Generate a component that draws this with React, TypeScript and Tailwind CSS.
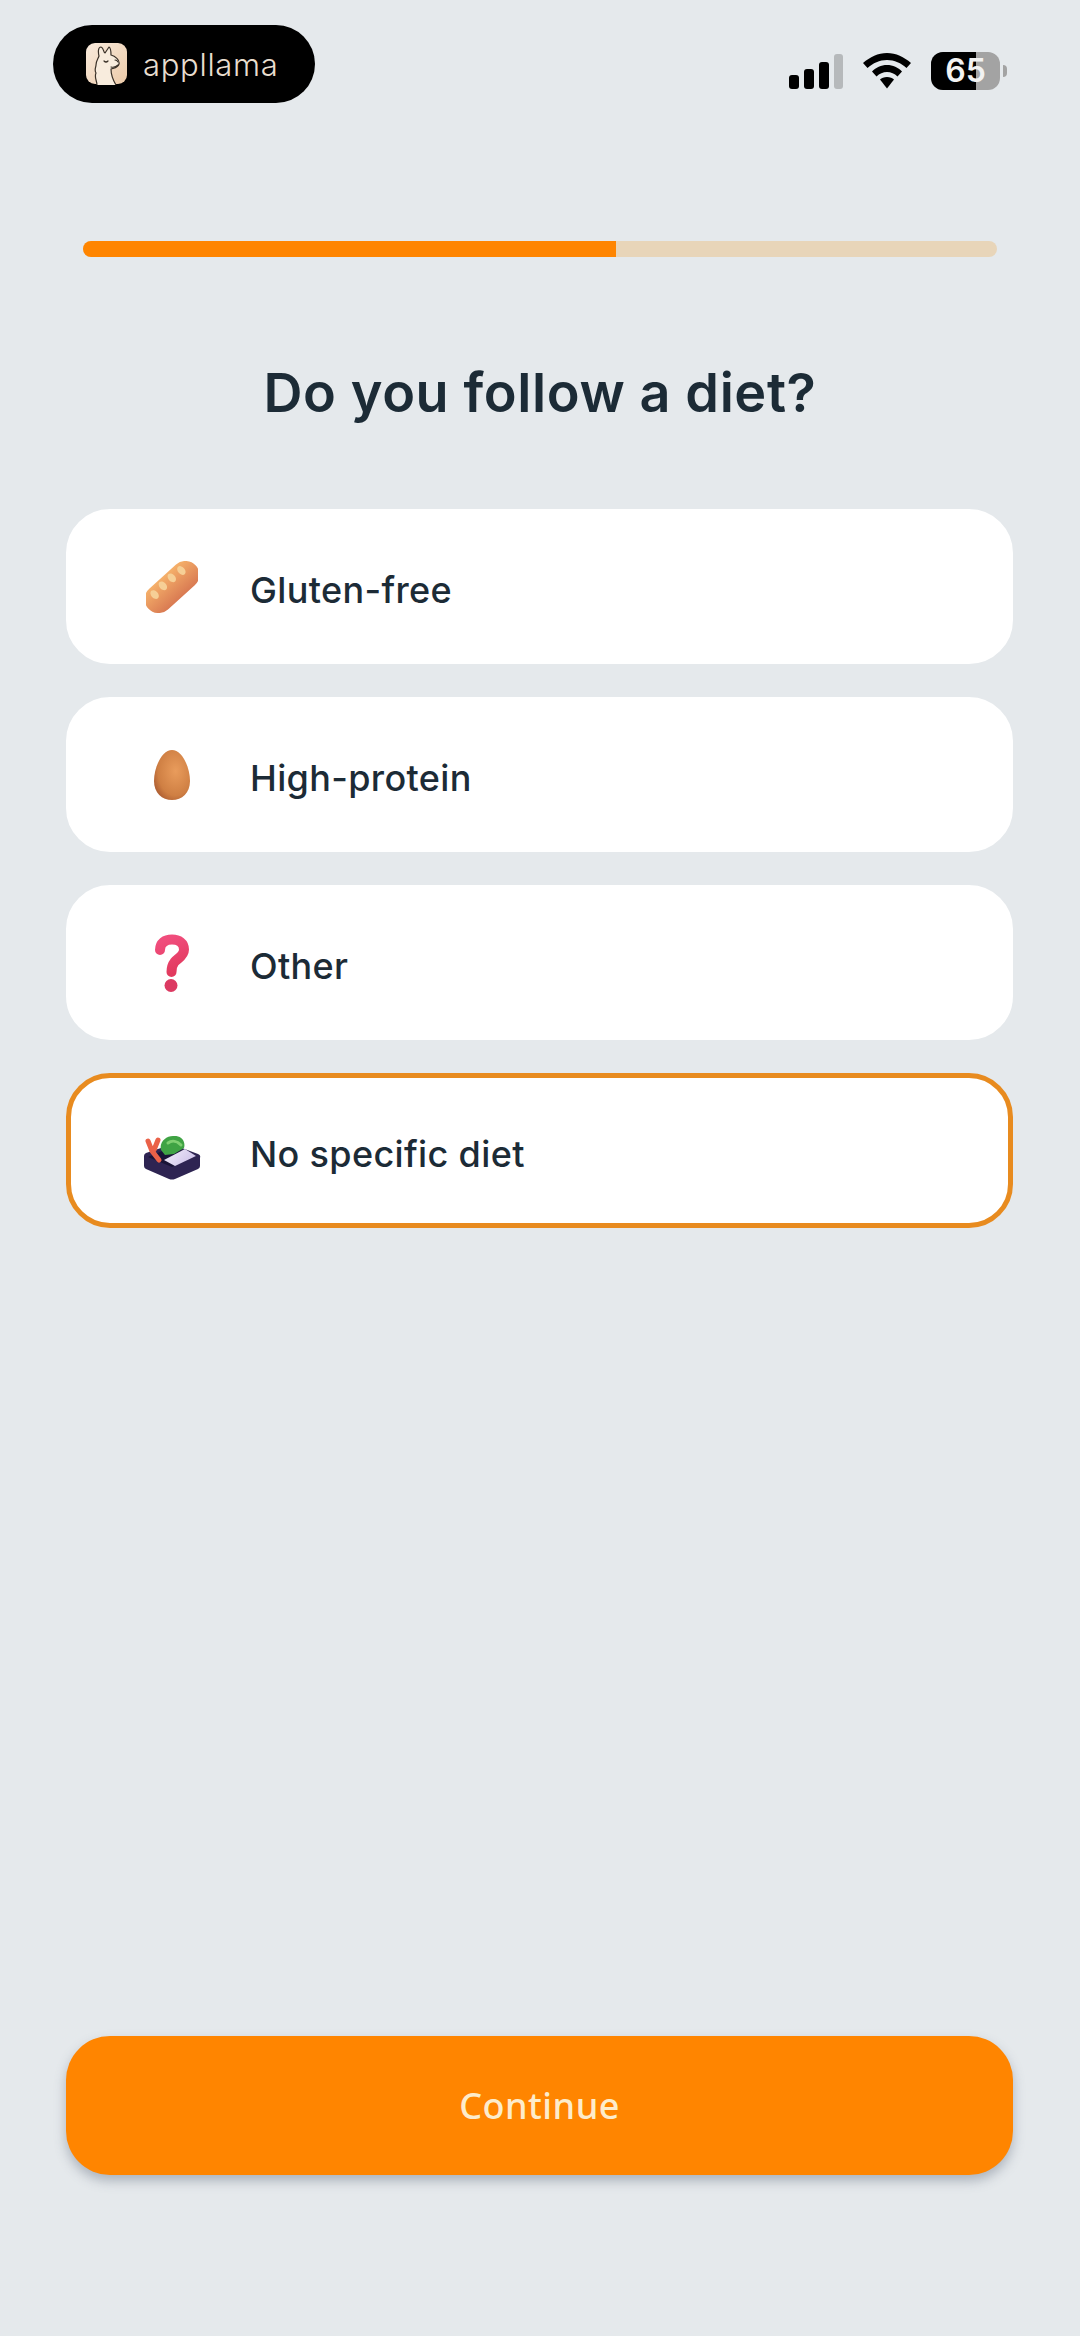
import { useId } from 'react'

const INTER = "font-['Inter',sans-serif]"
const NOTO = "font-['Noto_Sans','Open_Sans',sans-serif]"

function LlamaLogo() {
  const id = useId()
  return (
    <svg width="42" height="42" viewBox="0 0 42 42" className="shrink-0">
      <defs>
        <linearGradient id={id} x1="0" y1="0" x2="1" y2="1">
          <stop offset="0" stopColor="#f9ebdd" />
          <stop offset="1" stopColor="#eccaa8" />
        </linearGradient>
      </defs>
      <rect width="41" height="41" rx="9" fill={`url(#${id})`} />
      <path d="M11 42 C11 38 8 34 10 30 C8 27 10 24 10 22 C10 18 12 16 13 13 C12 9 12 4 15 4 C18 5 17 9 19 10 L23 4 C25 5 25 9 25 12 C29 13 34 17 33 21 C32 25 27 25 25 26 C25 32 27 37 30 42" fill="#f8ecdd" stroke="#3a3128" strokeWidth="1.2" strokeLinejoin="round" />
      <path d="M18 18 q2 2 4 0" fill="none" stroke="#3a3128" strokeWidth="1.2" strokeLinecap="round" />
      <path d="M25 24 q4 1 7 -2" fill="none" stroke="#3a3128" strokeWidth="1.1" strokeLinecap="round" />
      <path d="M29 17 q2 0 3 2" fill="none" stroke="#3a3128" strokeWidth="1.1" strokeLinecap="round" />
    </svg>
  )
}

function SignalIcon() {
  return (
    <svg width="54" height="35" viewBox="0 0 54 35">
      <rect x="0" y="21" width="10" height="14" rx="3" fill="#000" />
      <rect x="15" y="15" width="10" height="20" rx="3" fill="#000" />
      <rect x="30" y="8" width="10" height="27" rx="3" fill="#000" />
      <rect x="45" y="0" width="9" height="35" rx="3" fill="#b6b9bb" />
    </svg>
  )
}

function WifiIcon() {
  return (
    <svg width="48" height="36" viewBox="0 0 48 36">
      <path d="M24 0 C33 0 41 4 48 10 L43.5 15 C38 10 31.5 7 24 7 C16.5 7 10 10 4.5 15 L0 10 C7 4 15 0 24 0 Z" fill="#000" />
      <path d="M24 12 C30 12 35 14.5 39 18.5 L34.5 23.5 C31.5 20.5 28 19 24 19 C20 19 16.5 20.5 13.5 23.5 L9 18.5 C13 14.5 18 12 24 12 Z" fill="#000" />
      <path d="M24 24 C27 24 29.5 25 31 26.5 L24 35.5 L17 26.5 C18.5 25 21 24 24 24 Z" fill="#000" />
    </svg>
  )
}

function Battery() {
  return (
    <div className="flex items-center gap-[3px]">
      <div className="relative flex h-[38px] w-[69px] rounded-[12px] bg-[#a3a3a3]">
        <div className="h-full w-[45px] rounded-l-[12px] bg-black" />
        <span className={`absolute inset-0 flex items-center justify-center text-[32px] leading-none font-semibold text-[#f2f2f2] ${INTER}`}>
          65
        </span>
      </div>
      <div className="h-[12px] w-[4px] rounded-r-full bg-[#a3a3a3]" />
    </div>
  )
}

function BreadEmoji() {
  const id = useId()
  return (
    <svg width="52" height="52" viewBox="0 0 52 52">
      <defs>
        <linearGradient id={id} x1="0.5" y1="0" x2="0.5" y2="1">
          <stop offset="0" stopColor="#f5b06a" />
          <stop offset="1" stopColor="#d97a52" />
        </linearGradient>
      </defs>
      <g transform="rotate(-42 26 26)">
        <rect x="-6" y="12" width="64" height="28" rx="14" fill={`url(#${id})`} />
        <g fill="#f6cf96">
          <ellipse cx="8" cy="20" rx="3.5" ry="5" />
          <ellipse cx="20" cy="19" rx="3.5" ry="5" />
          <ellipse cx="32" cy="19" rx="3.5" ry="5" />
          <ellipse cx="44" cy="20" rx="3.5" ry="5" />
        </g>
      </g>
    </svg>
  )
}

function EggEmoji() {
  const id = useId()
  return (
    <svg width="36" height="50" viewBox="0 0 36 50">
      <defs>
        <radialGradient id={id} cx="0.6" cy="0.42" r="0.7">
          <stop offset="0" stopColor="#e99c5c" />
          <stop offset="0.7" stopColor="#cf7f43" />
          <stop offset="1" stopColor="#a8582f" />
        </radialGradient>
      </defs>
      <path d="M18 0 C28 0 36 17 36 31 C36 43 28 50 18 50 C8 50 0 43 0 31 C0 17 8 0 18 0 Z" fill={`url(#${id})`} />
    </svg>
  )
}

function QuestionEmoji() {
  const id = useId()
  return (
    <svg width="36" height="58" viewBox="0 0 36 58">
      <defs>
        <linearGradient id={id} x1="0.3" y1="0" x2="0.6" y2="1">
          <stop offset="0" stopColor="#f04d7c" />
          <stop offset="1" stopColor="#e23a5e" />
        </linearGradient>
      </defs>
      <path d="M6 16 C6 9 11 5.500 18 5.500 C25 5.500 30 9 30 15.500 C30 22 24 24 20.500 28 C18.500 30.500 17.500 33 17.500 38" fill="none" stroke={`url(#${id})`} strokeWidth="10" strokeLinecap="round" />
      <circle cx="17" cy="51.500" r="6.500" fill="#dc3a62" />
    </svg>
  )
}

function BentoEmoji() {
  const id = useId()
  return (
    <svg width="58" height="44" viewBox="0 0 58 44" className="mt-[15px]">
      <defs>
        <linearGradient id={id} x1="0" y1="0" x2="1" y2="0.5">
          <stop offset="0" stopColor="#f4f0fb" />
          <stop offset="1" stopColor="#cfc4ea" />
        </linearGradient>
      </defs>
      <path d="M1 20 Q1 18 3 17 L27 9 Q29 8 31 9 L55 18 Q58 19 57 22 L57 30 Q57 32 55 33 L32 43 Q29 44 26 43 L3 33 Q1 32 1 30 Z" fill="#2e2452" />
      <path d="M5 21 L29 11 L53 20 L29 31 Z" fill="#191437" />
      <path d="M21 24 L42 13 L53 20 L32 30 Z" fill={`url(#${id})`} />
      <path d="M18 14 C16 6 23 0 30 0 C38 -1 43 5 41 12 L31 18 L22 19 Z" fill="#3fa344" />
      <path d="M25 7 C29 4 34 5 38 9" fill="none" stroke="#7fcf71" strokeWidth="3" strokeLinecap="round" />
      <path d="M5 5 L9 15 L16 24 M15 4 L11 14" fill="none" stroke="#ea6148" strokeWidth="5" strokeLinecap="round" />
    </svg>
  )
}

const OPTIONS = [
  { label: 'Gluten-free', icon: <BreadEmoji /> },
  { label: 'High-protein', icon: <EggEmoji /> },
  { label: 'Other', icon: <QuestionEmoji /> },
  { label: 'No specific diet', icon: <BentoEmoji />, selected: true },
]

export default function App() {
  return (
    <div className={`flex h-[2336px] w-[1080px] flex-col bg-[#e5e9ec] ${INTER}`}>
      {/* status bar */}
      <div className="flex items-start justify-between pt-[25px] pr-[73px] pl-[53px]">
        <div className="flex h-[78px] w-[262px] items-center gap-[15px] rounded-full bg-black pl-[33px]">
          <LlamaLogo />
          <span className="text-[31px] leading-none font-light tracking-[0.7px] text-[#e8ddcf]">appllama</span>
        </div>
        <div className="flex items-center gap-[20px] pt-[27px]">
          <SignalIcon />
          <WifiIcon />
          <Battery />
        </div>
      </div>

      {/* progress */}
      <div className="mx-[83px] mt-[138px] h-[16px] overflow-hidden rounded-full bg-[#e8d5b9]">
        <div className="h-full w-[533px] bg-[#ff8500]" />
      </div>

      <h1 className="mt-[100px] text-center text-[54px] leading-[72px] font-semibold tracking-[0.6px] text-[#1c2b36]">
        Do you follow a diet?
      </h1>

      <div className="mt-[80px] mr-[67px] ml-[66px] flex flex-col gap-[33px]">
        {OPTIONS.map((o) => (
          <div
            key={o.label}
            className={`box-border flex h-[155px] items-center rounded-[44px] border-[5px] bg-white pl-[51px] ${
              o.selected ? 'border-[#e88b1f]' : 'border-white'
            }`}
          >
            <div className="flex w-[100px] items-center justify-center">{o.icon}</div>
            <span className="ml-[28px] pt-[6px] text-[36px] leading-[48px] font-medium tracking-[0.35px] text-[#1c2b36]">
              {o.label}
            </span>
          </div>
        ))}
      </div>

      <div className="mt-auto mr-[67px] mb-[161px] ml-[66px] flex h-[139px] items-center justify-center rounded-[44px] bg-[#ff8500] shadow-[0_6px_12px_rgba(70,80,100,0.35)]">
        <span className={`text-[36px] leading-[48px] font-medium tracking-[0.5px] text-[#fdeccb] ${NOTO}`}>Continue</span>
      </div>
    </div>
  )
}
